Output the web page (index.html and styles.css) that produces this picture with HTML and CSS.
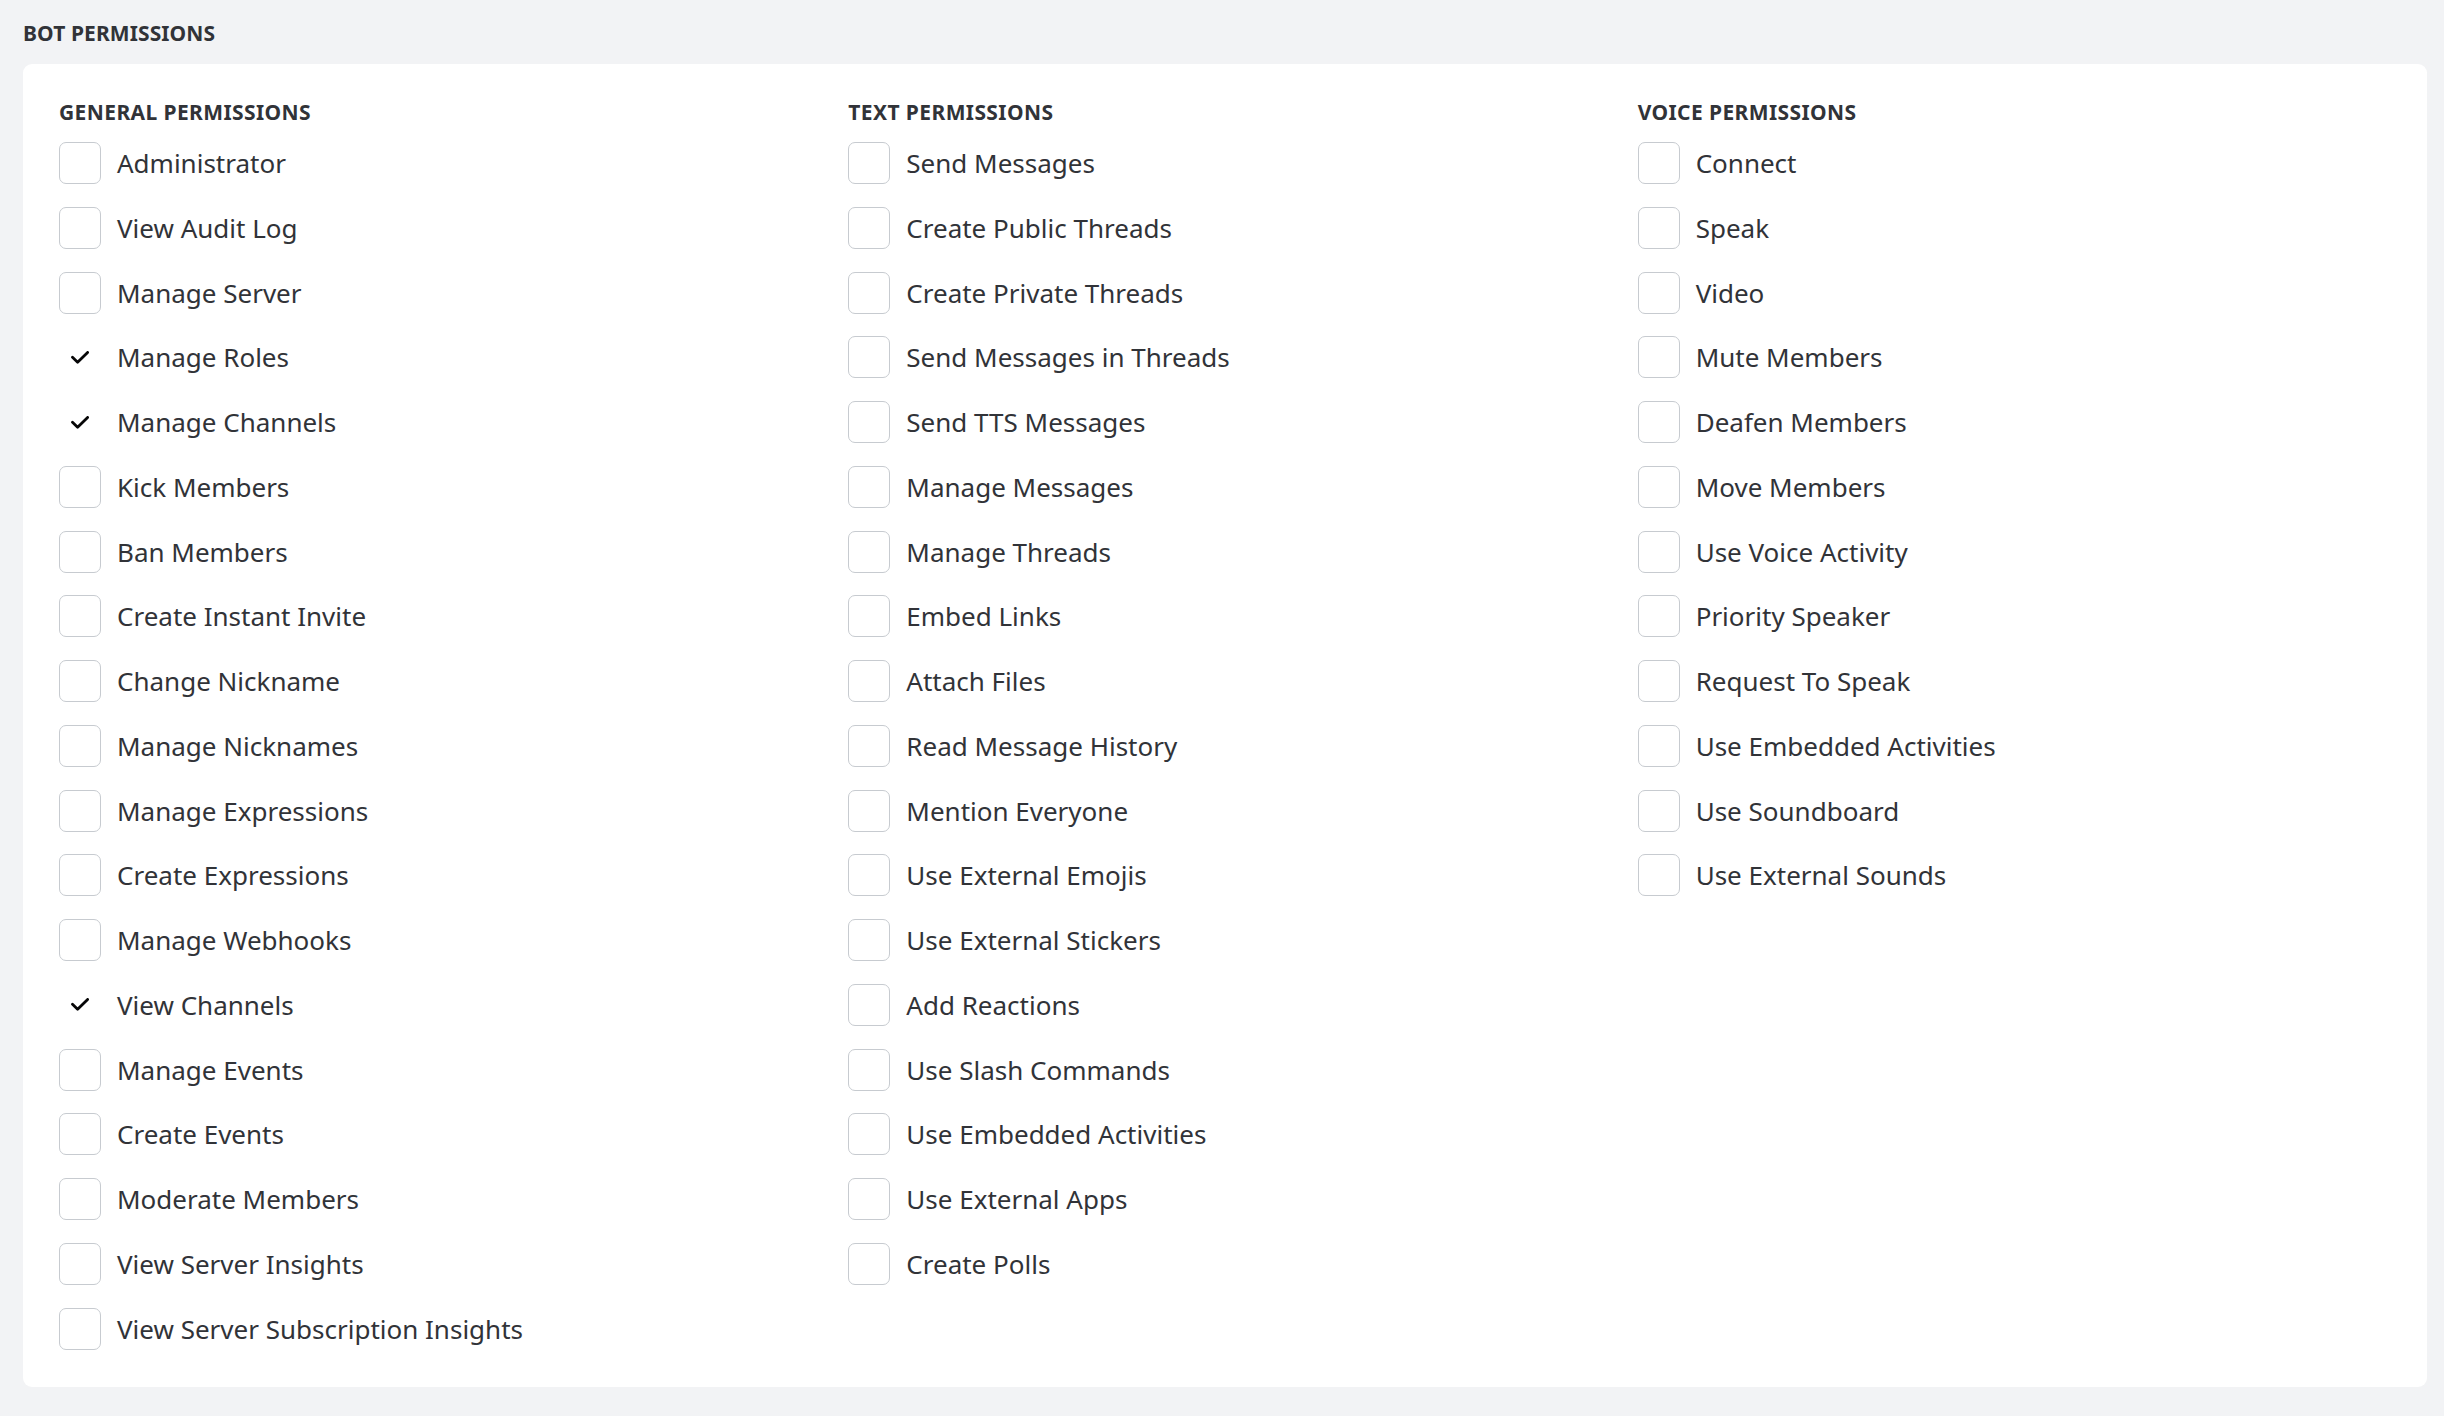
FILE: index.html
```html
<!DOCTYPE html>
<html lang="en">
<head>
<meta charset="utf-8">
<title>Bot Permissions</title>
<link rel="stylesheet" href="styles.css">
</head>
<body>
<div class="page">
  <h2 class="title">BOT PERMISSIONS</h2>
  <div class="card">
    <div class="col">
      <h3 class="heading">GENERAL PERMISSIONS</h3>
      <ul class="list">
        <li class="row"><span class="box"></span><span class="label">Administrator</span></li>
        <li class="row"><span class="box"></span><span class="label">View Audit Log</span></li>
        <li class="row"><span class="box"></span><span class="label">Manage Server</span></li>
        <li class="row"><span class="box checked"><svg viewBox="0 0 18 13" class="check"><path d="M1.5 6.3 L6.6 11.2 L16.6 1.4"/></svg></span><span class="label">Manage Roles</span></li>
        <li class="row"><span class="box checked"><svg viewBox="0 0 18 13" class="check"><path d="M1.5 6.3 L6.6 11.2 L16.6 1.4"/></svg></span><span class="label">Manage Channels</span></li>
        <li class="row"><span class="box"></span><span class="label">Kick Members</span></li>
        <li class="row"><span class="box"></span><span class="label">Ban Members</span></li>
        <li class="row"><span class="box"></span><span class="label">Create Instant Invite</span></li>
        <li class="row"><span class="box"></span><span class="label">Change Nickname</span></li>
        <li class="row"><span class="box"></span><span class="label">Manage Nicknames</span></li>
        <li class="row"><span class="box"></span><span class="label">Manage Expressions</span></li>
        <li class="row"><span class="box"></span><span class="label">Create Expressions</span></li>
        <li class="row"><span class="box"></span><span class="label">Manage Webhooks</span></li>
        <li class="row"><span class="box checked"><svg viewBox="0 0 18 13" class="check"><path d="M1.5 6.3 L6.6 11.2 L16.6 1.4"/></svg></span><span class="label">View Channels</span></li>
        <li class="row"><span class="box"></span><span class="label">Manage Events</span></li>
        <li class="row"><span class="box"></span><span class="label">Create Events</span></li>
        <li class="row"><span class="box"></span><span class="label">Moderate Members</span></li>
        <li class="row"><span class="box"></span><span class="label">View Server Insights</span></li>
        <li class="row"><span class="box"></span><span class="label">View Server Subscription Insights</span></li>
      </ul>
    </div>
    <div class="col">
      <h3 class="heading">TEXT PERMISSIONS</h3>
      <ul class="list">
        <li class="row"><span class="box"></span><span class="label">Send Messages</span></li>
        <li class="row"><span class="box"></span><span class="label">Create Public Threads</span></li>
        <li class="row"><span class="box"></span><span class="label">Create Private Threads</span></li>
        <li class="row"><span class="box"></span><span class="label">Send Messages in Threads</span></li>
        <li class="row"><span class="box"></span><span class="label">Send TTS Messages</span></li>
        <li class="row"><span class="box"></span><span class="label">Manage Messages</span></li>
        <li class="row"><span class="box"></span><span class="label">Manage Threads</span></li>
        <li class="row"><span class="box"></span><span class="label">Embed Links</span></li>
        <li class="row"><span class="box"></span><span class="label">Attach Files</span></li>
        <li class="row"><span class="box"></span><span class="label">Read Message History</span></li>
        <li class="row"><span class="box"></span><span class="label">Mention Everyone</span></li>
        <li class="row"><span class="box"></span><span class="label">Use External Emojis</span></li>
        <li class="row"><span class="box"></span><span class="label">Use External Stickers</span></li>
        <li class="row"><span class="box"></span><span class="label">Add Reactions</span></li>
        <li class="row"><span class="box"></span><span class="label">Use Slash Commands</span></li>
        <li class="row"><span class="box"></span><span class="label">Use Embedded Activities</span></li>
        <li class="row"><span class="box"></span><span class="label">Use External Apps</span></li>
        <li class="row"><span class="box"></span><span class="label">Create Polls</span></li>
      </ul>
    </div>
    <div class="col">
      <h3 class="heading">VOICE PERMISSIONS</h3>
      <ul class="list">
        <li class="row"><span class="box"></span><span class="label">Connect</span></li>
        <li class="row"><span class="box"></span><span class="label">Speak</span></li>
        <li class="row"><span class="box"></span><span class="label">Video</span></li>
        <li class="row"><span class="box"></span><span class="label">Mute Members</span></li>
        <li class="row"><span class="box"></span><span class="label">Deafen Members</span></li>
        <li class="row"><span class="box"></span><span class="label">Move Members</span></li>
        <li class="row"><span class="box"></span><span class="label">Use Voice Activity</span></li>
        <li class="row"><span class="box"></span><span class="label">Priority Speaker</span></li>
        <li class="row"><span class="box"></span><span class="label">Request To Speak</span></li>
        <li class="row"><span class="box"></span><span class="label">Use Embedded Activities</span></li>
        <li class="row"><span class="box"></span><span class="label">Use Soundboard</span></li>
        <li class="row"><span class="box"></span><span class="label">Use External Sounds</span></li>
      </ul>
    </div>
  </div>
</div>
</body>
</html>
```

FILE: styles.css
```css
html, body {
  margin: 0;
  padding: 0;
  background: #f2f3f5;
}

body {
  font-family: "Noto Sans", "Liberation Sans", sans-serif;
  color: #313338;
}

.page {
  padding: 20px 17px 28px 23px;
}

.title {
  margin: 0;
  font-size: 21px;
  line-height: 26px;
  font-weight: 700;
  color: #313338;
  letter-spacing: 0.1px;
}

.card {
  margin-top: 18px;
  background: #ffffff;
  border-radius: 9px;
  padding: 35px 0 37px 36px;
  display: grid;
  grid-template-columns: repeat(3, 1fr);
  align-items: start;
}

.heading {
  margin: 0 0 17px 0;
  font-size: 21px;
  line-height: 26px;
  font-weight: 700;
  color: #313338;
  letter-spacing: 0.4px;
}

.list {
  list-style: none;
  margin: 0;
  padding: 0;
  display: flex;
  flex-direction: column;
  gap: 22.75px;
}

.row {
  display: flex;
  align-items: center;
  gap: 16px;
  height: 42px;
}

.box {
  box-sizing: border-box;
  width: 42px;
  height: 42px;
  flex: none;
  border: 1.5px solid #c7cbd0;
  border-radius: 7px;
  display: flex;
  align-items: center;
  justify-content: center;
}

.box.checked {
  border-color: transparent;
}

.check {
  width: 18px;
  height: 13px;
  fill: none;
  stroke: #060607;
  stroke-width: 2.8;
  stroke-linecap: round;
  stroke-linejoin: round;
}

.label {
  font-size: 26px;
  line-height: 32px;
  color: #313338;
  white-space: nowrap;
}
```
